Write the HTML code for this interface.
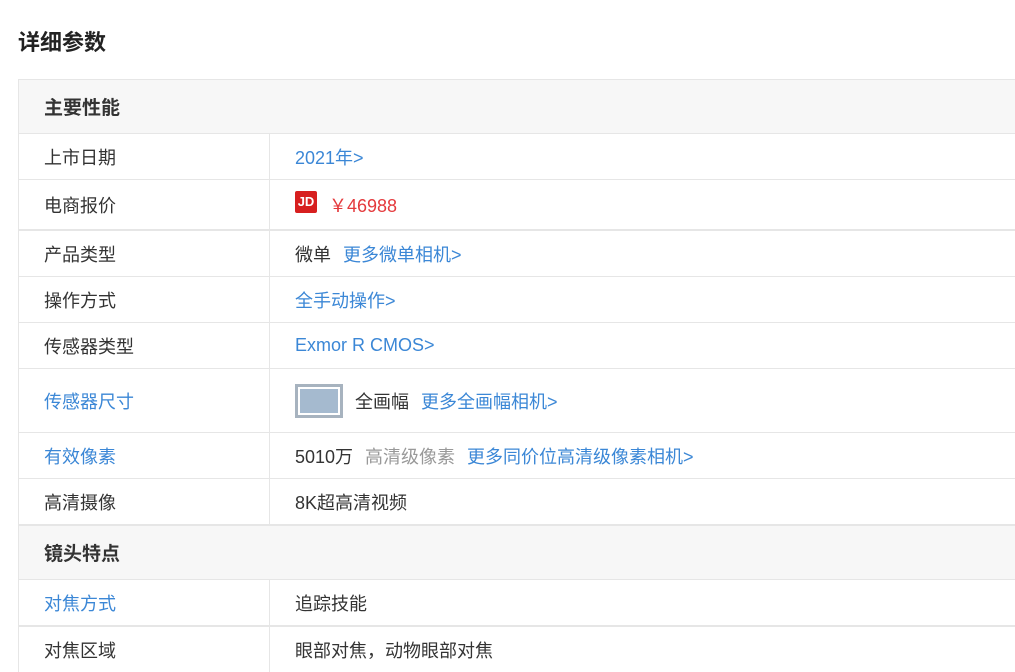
<!DOCTYPE html>
<html><head><meta charset="utf-8"><style>
body{margin:0;background:#fff;font-family:"Liberation Sans","Noto Sans CJK SC",sans-serif;width:1015px;height:669px;overflow:hidden;position:relative;color:#333}
h1{position:absolute;left:18px;top:28px;margin:0;font-size:22px;font-weight:bold;color:#222;line-height:30px}
.t{position:absolute;left:18px;top:79px;width:1000px;border-left:1px solid #e6e6e6}
.r{position:relative;border-top:1px solid #e6e6e6;font-size:18px;display:flex;align-items:center}
.r .k{width:251px;flex-shrink:0;padding-left:25px;border-right:1px solid #e6e6e6;height:100%;display:flex;align-items:center;box-sizing:border-box}
.r .v{padding-left:25px;display:flex;align-items:center}
.h{background:#f7f7f7;font-weight:bold;font-size:19px;padding-left:25px;color:#333}
.b{color:#3b87d6}.g{color:#999}.red{color:#e4393c}
.thick{border-top:2px solid #e6e6e6}
.sp{margin-left:12px}
</style></head><body>
<h1>详细参数</h1>
<div class="t">
<div class="r h" style="height:53px">主要性能</div>
<div class="r" style="height:45px"><div class="k">上市日期</div><div class="v b">2021年&gt;</div></div>
<div class="r" style="height:49px"><div class="k">电商报价</div><div class="v"><span style="display:inline-block;width:22px;height:22px;background:#d71f1f;border-radius:2px;color:#fff;font-size:13px;font-weight:bold;text-align:center;line-height:22px;margin-top:-6px">JD</span><span class="red" style="margin-left:12px;font-size:18px">￥46988</span></div></div>
<div class="r thick" style="height:45px"><div class="k">产品类型</div><div class="v">微单<span class="b sp">更多微单相机&gt;</span></div></div>
<div class="r" style="height:45px"><div class="k">操作方式</div><div class="v b">全手动操作&gt;</div></div>
<div class="r" style="height:45px"><div class="k">传感器类型</div><div class="v b">Exmor R CMOS&gt;</div></div>
<div class="r" style="height:63px"><div class="k b">传感器尺寸</div><div class="v"><span style="display:inline-block;width:42px;height:28px;border:3px solid #a7b3bf;background:#a5bacf;box-shadow:inset 0 0 0 2px #fff;margin-right:12px"></span>全画幅<span class="b sp">更多全画幅相机&gt;</span></div></div>
<div class="r" style="height:45px"><div class="k b">有效像素</div><div class="v">5010万<span class="g sp">高清级像素</span><span class="b sp">更多同价位高清级像素相机&gt;</span></div></div>
<div class="r" style="height:45px"><div class="k">高清摄像</div><div class="v">8K超高清视频</div></div>
<div class="r h thick" style="height:53px">镜头特点</div>
<div class="r" style="height:45px"><div class="k b">对焦方式</div><div class="v">追踪技能</div></div>
<div class="r thick" style="height:45px"><div class="k">对焦区域</div><div class="v">眼部对焦，动物眼部对焦</div></div>
</div>
</body></html>
